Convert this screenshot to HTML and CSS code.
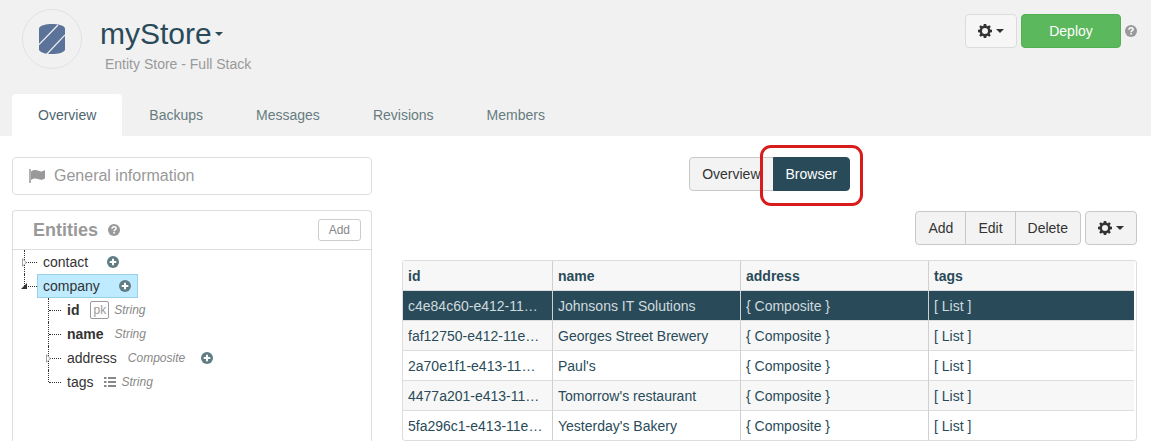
FILE: index.html
```html
<!DOCTYPE html>
<html lang="en">
<head>
<meta charset="utf-8">
<title>myStore</title>
<link rel="stylesheet" href="styles.css">
</head>
<body>
<svg class="sprite" aria-hidden="true">
  <symbol id="gear" viewBox="0 0 14 14">
    <path fill-rule="evenodd" d="M5.8 0h2.4l.4 1.8 1.1.5L11.300 1.200 12.800 2.700l-1.100 1.600.5 1.100L14 5.800v2.400l-1.800.4-.5 1.100 1.100 1.600-1.500 1.500-1.600-1.100-1.100.5L8.200 14H5.800l-.4-1.800-1.100-.5-1.600 1.100-1.500-1.500 1.100-1.600-.5-1.100L0 8.200V5.800l1.800-.4.5-1.100L1.200 2.700l1.500-1.500 1.600 1.100 1.100-.5zM7 4a3 3 0 1 0 0 6 3 3 0 0 0 0-6z"/>
  </symbol>
  <symbol id="help" viewBox="0 0 12 12">
    <circle cx="6" cy="6" r="6"/>
    <path d="M4 4.700C4.100 3.300 5 2.700 6.100 2.700 7.300 2.700 8.100 3.400 8.100 4.400 8.100 5.700 6.100 5.700 6.100 7.200" fill="none" stroke="#fff" stroke-width="1.500"/>
    <path d="M5.300 8h1.600v1.500H5.300z" fill="#fff"/>
  </symbol>
  <symbol id="plus" viewBox="0 0 12 12">
    <circle cx="6" cy="6" r="6"/>
    <path d="M6 2.700v6.600M2.700 6h6.600" stroke="#fff" stroke-width="2"/>
  </symbol>
</svg>

<header class="header">
  <div class="brand-row">
    <div class="avatar">
      <svg width="26" height="30" viewBox="0 0 26 30" aria-hidden="true">
        <path d="M0 4C2 1 7 0 13 0s11 1 13 4v22c-2 3-7 4-13 4S2 29 0 26z" fill="#5c7399"/>
        <path d="M0 20.500 19 1M8 30 26 11" stroke="#f1f1f1" stroke-width="1.200"/>
      </svg>
    </div>
    <div class="brand">
      <h1 class="title">myStore<span class="caret"></span></h1>
      <p class="subtitle">Entity Store - Full Stack</p>
    </div>
    <div class="actions">
      <button class="btn btn-light" type="button" aria-label="Settings"><svg class="gear"><use href="#gear"/></svg><span class="caret"></span></button>
      <button class="btn btn-deploy" type="button">Deploy</button>
      <svg class="help"><use href="#help"/></svg>
    </div>
  </div>
  <nav class="tabs">
    <a class="tab active" href="#">Overview</a>
    <a class="tab" href="#">Backups</a>
    <a class="tab" href="#">Messages</a>
    <a class="tab" href="#">Revisions</a>
    <a class="tab" href="#">Members</a>
  </nav>
</header>

<div class="layout">
  <aside class="sidebar">
    <div class="general">
      <svg width="16" height="14" viewBox="0 0 16 14" aria-hidden="true">
        <path d="M1 0v14" stroke="#999" stroke-width="1.500"/>
        <path d="M2 2.500C5 .6 7 .6 9.500 1.800S13 2.600 16 1v8.600c-3 1.500-4.500 1.500-7 .5S5 9.400 2 11z" fill="#999"/>
      </svg>
      General information
    </div>
    <section class="entities">
      <div class="entities-head">
        <h2>Entities</h2>
        <svg class="help"><use href="#help"/></svg>
        <button class="btn-small" type="button">Add</button>
      </div>
      <ul class="tree">
        <li class="node">
          <svg class="arrow" viewBox="0 0 5 9"><path d="M.5.800 4.300 4.500.5 8.200z" fill="#fff" stroke="#999" stroke-width=".9"/></svg>
          <span class="label">contact <svg class="plus"><use href="#plus"/></svg></span>
        </li>
        <li class="node last">
          <svg class="arrow open" viewBox="0 0 6 6"><path d="M6 0v6H0z" fill="#333"/></svg>
          <span class="label selected">company <svg class="plus"><use href="#plus"/></svg></span>
          <ul class="children">
            <li class="node"><span class="label"><b>id</b><span class="pk">pk</span><i>String</i></span></li>
            <li class="node"><span class="label"><b>name</b><i>String</i></span></li>
            <li class="node">
              <svg class="arrow" viewBox="0 0 5 9"><path d="M.5.800 4.300 4.500.5 8.200z" fill="#fff" stroke="#999" stroke-width=".9"/></svg>
              <span class="label">address<i>Composite</i><svg class="plus"><use href="#plus"/></svg></span>
            </li>
            <li class="node last"><span class="label">tags<svg class="list" viewBox="0 0 12 10"><path d="M0 1h2.500M4 1h8M0 5h2.500M4 5h8M0 9h2.500M4 9h8" stroke="#888" stroke-width="2"/></svg><i>String</i></span></li>
          </ul>
        </li>
      </ul>
    </section>
  </aside>

  <main class="main">
    <div class="mode">
      <div class="group">
        <button class="btn" type="button">Overview</button>
        <button class="btn btn-dark" type="button">Browser</button>
        <span class="highlight"></span>
      </div>
    </div>
    <div class="toolbar">
      <div class="group">
        <button class="btn" type="button">Add</button>
        <button class="btn" type="button">Edit</button>
        <button class="btn" type="button">Delete</button>
      </div>
      <button class="btn" type="button" aria-label="Table options"><svg class="gear"><use href="#gear"/></svg><span class="caret"></span></button>
    </div>
    <div class="grid">
      <table>
        <colgroup><col class="col-id"><col class="col-mid"><col class="col-mid"><col></colgroup>
        <thead><tr><th>id</th><th>name</th><th>address</th><th>tags</th></tr></thead>
        <tbody>
          <tr class="current"><td>c4e84c60-e412-11…</td><td>Johnsons IT Solutions</td><td>{ Composite }</td><td>[ List ]</td></tr>
          <tr><td>faf12750-e412-11e…</td><td>Georges Street Brewery</td><td>{ Composite }</td><td>[ List ]</td></tr>
          <tr><td>2a70e1f1-e413-11…</td><td>Paul's</td><td>{ Composite }</td><td>[ List ]</td></tr>
          <tr><td>4477a201-e413-11…</td><td>Tomorrow's restaurant</td><td>{ Composite }</td><td>[ List ]</td></tr>
          <tr><td>5fa296c1-e413-11e…</td><td>Yesterday's Bakery</td><td>{ Composite }</td><td>[ List ]</td></tr>
        </tbody>
      </table>
    </div>
  </main>
</div>
</body>
</html>
```
FILE: styles.css
```css
* { box-sizing: border-box; }

body {
  margin: 0;
  min-height: 100vh;
  display: flex;
  flex-direction: column;
  background: #fff;
  color: #333;
  font: 14px/20px "Liberation Sans", Arial, sans-serif;
}

h1, h2, p, ul { margin: 0; padding: 0; }
ul { list-style: none; }
button { font: inherit; }
svg { flex: none; }
.sprite { position: absolute; width: 0; height: 0; }

.header { background: #f1f1f1; padding: 9px 14px 0 12px; }
.brand-row { display: flex; height: 85px; padding-left: 10px; align-items: flex-start; }
.avatar {
  display: flex;
  align-items: center;
  justify-content: center;
  width: 60px;
  height: 60px;
  border: 1px solid #dfe1e6;
  border-radius: 50%;
}
.brand { padding: 4px 0 0 18px; flex: 1; }
.title {
  display: flex;
  align-items: center;
  gap: 3px;
  color: #294b59;
  font-size: 30px;
  line-height: 41px;
  font-weight: normal;
}
.subtitle { padding-left: 5px; color: #999; }
.caret {
  border: 4px solid transparent;
  border-top-color: currentColor;
  border-bottom: 0;
}
.actions { display: flex; align-items: center; gap: 4px; padding-top: 5px; }
.help { width: 12px; height: 12px; fill: #999; }
.gear { width: 14px; height: 14px; fill: currentColor; }

.btn {
  display: flex;
  align-items: center;
  gap: 4px;
  height: 34px;
  padding: 0 12px;
  border: 1px solid #c8c8c8;
  border-radius: 4px;
  background: #f3f3f3;
  color: #333;
}
.btn-light { border-color: #dcdcdc; background: #f6f6f6; }
.btn-deploy {
  justify-content: center;
  width: 100px;
  border-color: #50b050;
  background: #5cb85c;
  color: #fff;
}
.btn-dark { border-color: #294b59; background: #294b59; color: #fff; }

.tabs { display: flex; gap: 1px; }
.tab {
  padding: 11px 26px;
  border-radius: 4px 4px 0 0;
  color: #667c80;
  text-decoration: none;
}
.tab.active { background: #fff; color: #4d6570; }

.layout { flex: 1; display: flex; gap: 30px; padding: 21px 14px 0 12px; }
.sidebar { flex: none; width: 360px; display: flex; flex-direction: column; gap: 15px; }
.general {
  display: flex;
  align-items: center;
  gap: 9px;
  height: 38px;
  padding-left: 16px;
  border: 1px solid #ddd;
  border-radius: 4px;
  color: #999;
  font-size: 16px;
}
.entities { flex: 1; border: 1px solid #ddd; border-bottom: 0; border-radius: 4px 4px 0 0; }
.entities-head {
  display: flex;
  align-items: center;
  gap: 10px;
  height: 39px;
  padding: 0 10px 0 20px;
  border-bottom: 1px solid #ddd;
  color: #999;
}
.entities-head h2 { font-size: 18px; }
.btn-small {
  margin-left: auto;
  height: 22px;
  padding: 0 10px;
  border: 1px solid #ccc;
  border-radius: 3px;
  background: #fff;
  color: #888;
  font-size: 12px;
}

.tree { padding-left: 11px; }
.node { position: relative; padding-left: 13px; }
.node::before {
  content: "";
  position: absolute;
  left: 0;
  top: 0;
  height: 100%;
  border-left: 1px dotted #333;
}
.node.last::before { height: 12px; }
.node::after {
  content: "";
  position: absolute;
  left: 1px;
  top: 12px;
  width: 12px;
  border-top: 1px dotted #333;
}
.arrow { position: absolute; z-index: 1; left: -2px; top: 8px; width: 5px; height: 9px; }
.arrow.open { left: -3px; top: 9px; width: 6px; height: 6px; }
.label {
  display: inline-flex;
  align-items: center;
  height: 24px;
  padding: 0 6px;
  vertical-align: top;
}
.label.selected { border: 1px solid #99d0ea; padding: 0 6px 0 5px; background: #beebff; }
.label i { margin-left: 11px; color: #888; font-size: 12px; }
.plus { width: 12px; height: 12px; margin-left: 19px; fill: #607d86; }
.label i + .plus { margin-left: 16px; }
.pk {
  margin-left: 11px;
  padding: 0 2px;
  border: 1px solid #999;
  border-radius: 2px;
  color: #999;
  font-size: 12px;
  line-height: 16px;
}
.label .list { width: 12px; height: 10px; margin-left: 11px; }
.label .pk + i, .label .list + i { margin-left: 5px; }
.children { padding-left: 11px; }

.main { flex: 1; min-width: 0; }
.mode { display: flex; justify-content: center; }
.group { position: relative; display: flex; }
.group .btn + .btn { margin-left: -1px; border-top-left-radius: 0; border-bottom-left-radius: 0; }
.group .btn:has(+ .btn) { border-top-right-radius: 0; border-bottom-right-radius: 0; }
.highlight {
  position: absolute;
  top: -12px;
  right: -13px;
  width: 103px;
  height: 61px;
  border: 3px solid #d81b1b;
  border-radius: 11px;
}
.toolbar { display: flex; justify-content: flex-end; gap: 4px; padding: 20px 0 15px; }

.grid { border: 1px solid #ddd; border-radius: 3px; padding-right: 2px; }
table { width: 100%; table-layout: fixed; border-collapse: separate; border-spacing: 0; color: #294b59; }
.col-id { width: 150px; }
.col-mid { width: 188px; }
th, td {
  height: 30px;
  padding: 0 5px;
  border-right: 1px solid #d0d0d0;
  border-bottom: 1px solid #ddd;
  overflow: hidden;
  text-align: left;
  text-overflow: ellipsis;
  white-space: nowrap;
}
th:last-child, td:last-child { border-right: 0; }
tbody tr:last-child td { height: 29px; border-bottom: 0; }
th, tbody tr:nth-child(even) { background: #f7f7f7; }
.current { background: #294b59; color: #d0dade; }
```
